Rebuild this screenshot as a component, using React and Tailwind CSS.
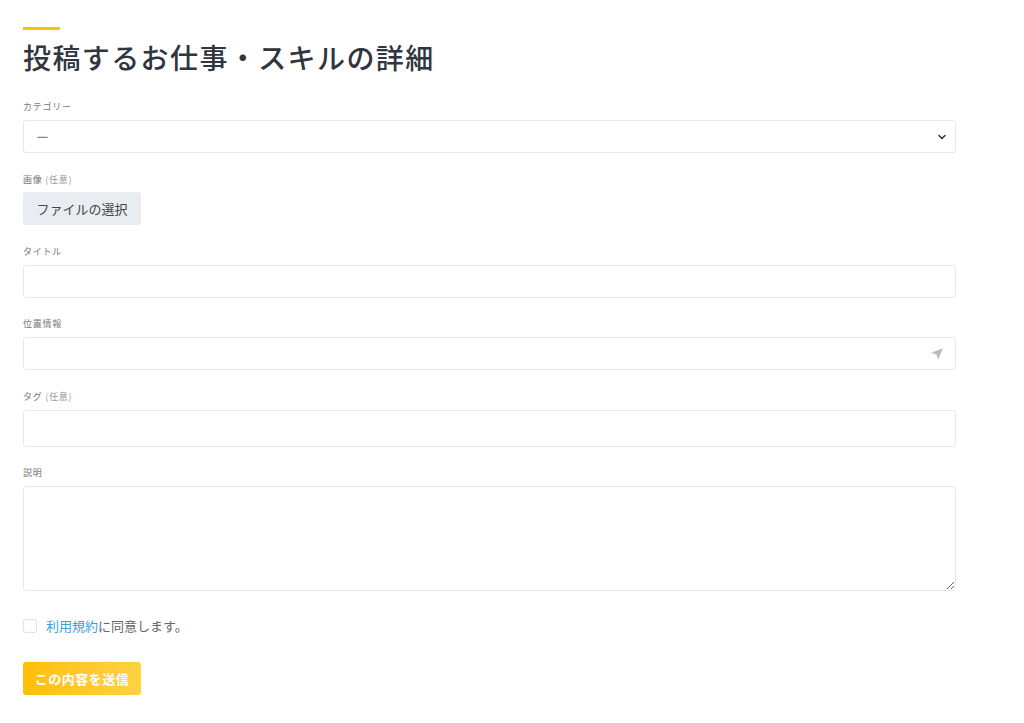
import { ChevronDown } from "lucide-react";

const font = { fontFamily: '"Noto Sans CJK JP", "Noto Sans", sans-serif' };

const Label = ({ children, optional }) => (
  <label className="block text-[9px] leading-[12px] tracking-[0.08em] text-[#777]">
    {children}
    {optional && <span className="text-[#999]"> (任意)</span>}
  </label>
);

const inputCls =
  "block w-full border border-[#e8e8e8] rounded-[3px] bg-white px-3 text-[13px] text-[#333] outline-none";

export default function App() {
  return (
    <div className="min-h-screen bg-white" style={font}>
      <div className="w-[933px] ml-[23px] pt-[27px]">
        <div className="w-[37px] h-[3px] bg-[#ffc107]" />
        <h1 className="mt-[9px] text-[28px] font-medium leading-[36px] tracking-[0.05em] text-[#2f3640]">
          投稿するお仕事・スキルの詳細
        </h1>

        {/* カテゴリー */}
        <div className="mt-[26px]">
          <Label>カテゴリー</Label>
          <div className="relative mt-[7px]">
            <div className={inputCls + " h-[33px] flex items-center text-[#888]"}>ー</div>
            <ChevronDown
              className="absolute right-[8px] top-[11px] w-[12px] h-[12px] text-[#333]"
              strokeWidth={3}
            />
          </div>
        </div>

        {/* 画像 */}
        <div className="mt-[21px]">
          <Label optional>画像</Label>
          <button className="mt-[6px] h-[33px] w-[118px] rounded-[3px] bg-[#e9ecf0] text-[13px] text-[#444]">
            ファイルの選択
          </button>
        </div>

        {/* タイトル */}
        <div className="mt-[21px]">
          <Label>タイトル</Label>
          <input className={inputCls + " mt-[7px] h-[33px]"} />
        </div>

        {/* 位置情報 */}
        <div className="mt-[20px]">
          <Label>位置情報</Label>
          <div className="relative mt-[7px]">
            <input className={inputCls + " h-[33px]"} />
            <svg
              viewBox="0 0 24 24"
              className="absolute right-[12px] top-[10px] w-[14px] h-[14px]"
            >
              <path d="M22 2 L2 10 L11 13 L14 22 Z" fill="#b5bcc8" />
            </svg>
          </div>
        </div>

        {/* タグ */}
        <div className="mt-[21px]">
          <Label optional>タグ</Label>
          <input className={inputCls + " mt-[7px] h-[37px]"} />
        </div>

        {/* 説明 */}
        <div className="mt-[20px]">
          <Label>説明</Label>
          <textarea className={inputCls + " mt-[7px] h-[105px] py-2 resize-y"} />
        </div>

        {/* 利用規約 */}
        <div className="mt-[26px] flex items-center gap-[9px]">
          <span className="w-[14px] h-[14px] rounded-[3px] border border-[#dde1e6] bg-white" />
          <span className="text-[13px] leading-[18px] text-[#666]">
            <a className="text-[#3b9ee0]">利用規約</a>に同意します。
          </span>
        </div>

        {/* 送信 */}
        <button className="mt-[27px] h-[33px] w-[118px] rounded-[3px] bg-gradient-to-r from-[#ffbf00] to-[#ffd23f] text-[13px] font-bold tracking-[0.04em] text-white">
          この内容を送信
        </button>
      </div>
    </div>
  );
}
